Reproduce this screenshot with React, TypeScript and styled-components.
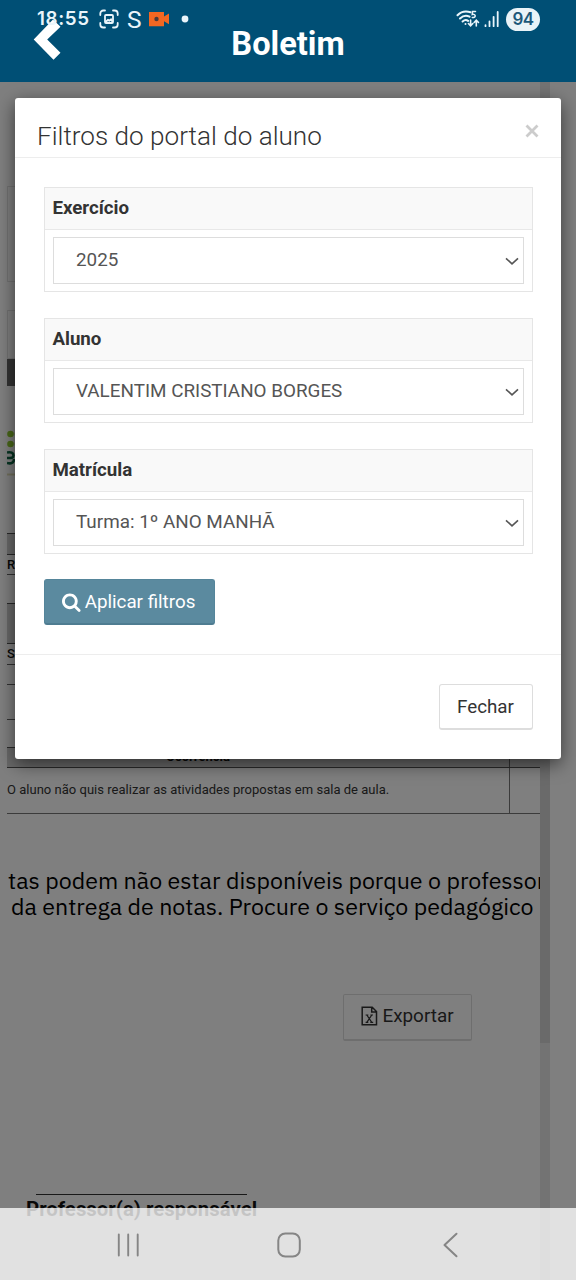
import React from "react";
import styled, { createGlobalStyle } from "styled-components";

const GlobalStyle = createGlobalStyle`
  * { box-sizing: border-box; }
  body { margin: 0; background: #fff; font-family: Roboto, sans-serif; }
  button { font-family: inherit; cursor: pointer; }
`;

const Screen = styled.div`
  position: relative;
  width: 576px;
  height: 1280px;
  overflow: hidden;
  display: flex;
  flex-direction: column;
  background: #fff;
`;

/* ---------- app header ---------- */
const Header = styled.header`
  flex: none;
  height: 82px;
  display: grid;
  grid-template-columns: 61px 1fr 61px;
  align-items: center;
  background: #004f75;
  color: #fff;
`;

const BackButton = styled.button`
  display: flex;
  justify-content: flex-end;
  padding: 0 0 3px;
  border: 0;
  background: none;
  color: inherit;
`;

const HeaderTitle = styled.h1`
  margin: 5px 0 0;
  font-size: 32.6px;
  line-height: 40px;
  font-weight: 700;
  text-align: center;
`;

const StatusBar = styled.div`
  position: absolute;
  z-index: 5;
  top: 0;
  left: 0;
  right: 0;
  height: 38px;
  padding: 0 36px 0 37px;
  display: flex;
  align-items: center;
  justify-content: space-between;
  color: #eaf5fb;
`;

const StatusGroup = styled.div<{ $gap: number }>`
  display: flex;
  align-items: center;
  gap: ${(p) => p.$gap}px;
`;

const Clock = styled.span`
  width: 54px;
  font: 600 18.8px/20px Inter, sans-serif;
  letter-spacing: 0.6px;
  white-space: nowrap;
`;

const AppLetter = styled.span`
  margin: 0 -1px 0 0;
  padding-top: 1px;
  font-size: 24.5px;
  line-height: 24px;
`;

const Battery = styled.span`
  width: 34px;
  height: 23px;
  margin-left: 2px;
  border-radius: 12px;
  background: #e9f3f8;
  color: #1c587a;
  font: 600 17px/23px Inter, sans-serif;
  letter-spacing: -0.6px;
  text-align: center;
`;

/* ---------- report page ---------- */
const Body = styled.div`
  flex: 1;
  min-height: 0;
  display: grid;
  grid-template-columns: 533px 10px 1fr;
  padding-left: 7px;
`;

const Report = styled.main`
  overflow: hidden;
  display: flex;
  flex-direction: column;
  color: #111;
`;

const ScrollTrack = styled.div`
  padding-top: 16px;
  background: #e6e6e6;
`;

const ScrollThumb = styled.div`
  height: 945px;
  background: #d4d4d4;
`;

const Spacer = styled.div<{ $h: number }>`
  flex: none;
  height: ${(p) => p.$h}px;
`;

const Panel = styled.div<{ $h: number }>`
  flex: none;
  height: ${(p) => p.$h}px;
  border: 1px solid #e2e2e2;
`;

const DarkBar = styled.div`
  flex: none;
  height: 27px;
  background: #666;
`;

const LogoBlock = styled.div`
  flex: none;
  height: 147px;
  padding-top: 38px;
`;

const HeadRow = styled.div<{ $h: number }>`
  flex: none;
  height: ${(p) => p.$h}px;
  display: flex;
  border: solid #555;
  border-width: 1px 0;
  background: #d2d2d2;
`;

const TextRow = styled.div<{ $h: number }>`
  flex: none;
  height: ${(p) => p.$h}px;
  border-bottom: 1px solid #666;
  font-size: 13px;
  line-height: ${(p) => p.$h - 1}px;
  font-weight: 500;
`;

const OccurrenceHead = styled.div`
  width: 503px;
  padding-left: 159px;
  border-right: 1px solid #666;
  font-size: 13px;
  line-height: 17px;
  font-weight: 700;
`;

const OccurrenceRow = styled.div`
  flex: none;
  height: 46px;
  display: flex;
  border-bottom: 1px solid #777;
`;

const OccurrenceText = styled.div`
  width: 503px;
  border-right: 1px solid #777;
  font-size: 13px;
  line-height: 43px;
  letter-spacing: 0.02px;
  white-space: nowrap;
  color: #333;
`;

const Notice = styled.p<{ $indent: number }>`
  flex: none;
  margin: 0;
  padding-left: ${(p) => p.$indent}px;
  font: 400 23.2px/26px "IBM Plex Sans", "Noto Sans", sans-serif;
  white-space: nowrap;
  color: #000;
`;

const ExportButton = styled.button`
  flex: none;
  align-self: flex-end;
  width: 129px;
  height: 47px;
  margin-right: 68px;
  padding: 0 0 3px;
  display: flex;
  align-items: center;
  justify-content: center;
  gap: 4px;
  border: 1px solid #ddd;
  border-bottom-width: 2px;
  border-radius: 2px;
  background: #fff;
  color: #333;
  font-size: 18.9px;
`;

const Signature = styled.div`
  flex: none;
  width: 211px;
  margin-left: 29px;
  border-top: 1px solid #333;
`;

const SignatureName = styled.div`
  margin-left: -10px;
  padding-top: 2px;
  font-size: 20.4px;
  line-height: 24px;
  font-weight: 700;
  white-space: nowrap;
`;

const Backdrop = styled.div`
  position: absolute;
  z-index: 1;
  inset: 82px 0 0;
  background: rgba(0, 0, 0, 0.5);
`;

/* ---------- filter dialog ---------- */
const Dialog = styled.section`
  position: absolute;
  z-index: 2;
  top: 98px;
  left: 15px;
  width: 546px;
  height: 661px;
  display: flex;
  flex-direction: column;
  border-radius: 3px;
  background: #fff;
  box-shadow: 0 5px 18px rgba(0, 0, 0, 0.55);
`;

const DialogHeader = styled.div`
  height: 60px;
  padding: 16px 22px 0;
  display: flex;
  justify-content: space-between;
  border-bottom: 1px solid #ededed;
`;

const DialogTitle = styled.h2`
  margin: 0;
  font-size: 26.1px;
  line-height: 44px;
  font-weight: 300;
  color: #333;
  white-space: nowrap;
`;

const CloseButton = styled.button`
  height: 34px;
  padding: 0;
  border: 0;
  background: none;
  color: #ccc;
  line-height: 0;
`;

const DialogBody = styled.div`
  height: 497px;
  padding: 29px 28px 0 29px;
  display: flex;
  flex-direction: column;
  align-items: stretch;
  border-bottom: 1px solid #ededed;
`;

const Field = styled.div`
  height: 105px;
  margin-bottom: 26px;
  border: 1px solid #e5e5e5;

  &:last-of-type {
    margin-bottom: 25px;
  }
`;

const FieldLabel = styled.div`
  height: 42px;
  padding-left: 7.4px;
  border-bottom: 1px solid #e8e8e8;
  background: #f9f9f9;
  color: #333;
  font-size: 18.7px;
  line-height: 41px;
  font-weight: 700;
`;

const SelectBox = styled.div`
  height: 47px;
  margin: 7px 8px 0 7.5px;
  padding: 0 4px 2px 22.5px;
  display: flex;
  align-items: center;
  justify-content: space-between;
  border: 1px solid #ddd;
  color: #555;
  font-size: 18.85px;
  white-space: nowrap;
`;

const ApplyButton = styled.button`
  align-self: flex-start;
  width: 171px;
  height: 46px;
  padding: 0 2px 0 0;
  display: flex;
  align-items: center;
  justify-content: center;
  gap: 3px;
  border: 1px solid #55859a;
  border-bottom: 2px solid #4e7c91;
  border-radius: 3px;
  background: #5b8a9f;
  color: #fff;
  font-size: 18.8px;
  white-space: nowrap;
`;

const DialogFooter = styled.div`
  padding: 29px 28px 0;
  display: flex;
  justify-content: flex-end;
`;

const DismissButton = styled.button`
  width: 94px;
  height: 46px;
  padding: 0 1px 0 0;
  border: 1px solid #ddd;
  border-bottom-width: 2px;
  border-radius: 3px;
  background: #fff;
  color: #333;
  font-size: 18.8px;
`;

/* ---------- system navigation ---------- */
const NavBar = styled.nav`
  position: absolute;
  z-index: 3;
  bottom: 0;
  left: 0;
  right: 0;
  height: 72px;
  padding: 2px 117px 0 116px;
  display: grid;
  grid-template-columns: 24px 1fr 18px;
  align-items: center;
  justify-items: center;
  background: rgba(255, 255, 255, 0.765);
  color: #858585;
`;

const BackIcon = () => (
  <svg width="28" height="43" viewBox="0 0 28 43" fill="currentColor">
    <path d="M.7 21.5 20 1.5l7.5 7.2-13.3 12.8 13.3 13.2-7 7z" />
  </svg>
);

const CaptureIcon = () => (
  <svg width="20" height="20" viewBox="0 0 20 20" fill="none" stroke="currentColor" strokeWidth="1.8" strokeLinecap="round">
    <path d="M1.3 6V4.5a3 3 0 0 1 3-3H6M14 1.5h1.7a3 3 0 0 1 3 3V6M18.7 14v1.5a3 3 0 0 1-3 3H14M6 18.5H4.3a3 3 0 0 1-3-3V14" />
    <rect x="6" y="6" width="8" height="8" rx="1" />
    <path d="M7 12.5 9 11l1.400.7L12 10.500l1 1.500" strokeWidth="2" />
  </svg>
);

const CameraIcon = () => (
  <svg width="21" height="16" viewBox="0 0 21 16">
    <path fill="#f26722" d="M0 1h15v4.600L20 2.500v10.800L15 10.200v5H0z" />
    <circle cx="7.500" cy="8" r="2.200" fill="#4a3b3b" />
  </svg>
);

const WifiIcon = () => (
  <svg width="24" height="20" viewBox="0 0 24 20" fill="none" stroke="currentColor" strokeWidth="2" strokeLinecap="round">
    <path d="M1.500 6.200C5 2.600 10 1.800 14.500 3.200M4 9.500c3-2.800 6.500-3.300 9.500-1.800M6.600 12.500c1.800-1.600 4-1.700 5.500-.6" />
    <circle cx="9.500" cy="15" r="1" fill="currentColor" stroke="none" />
    <path d="M19.500 2.400h-3l-.3 3.100c3.600-.9 4.400 3.200.1 3.100" strokeWidth="1.500" />
    <path d="M14.600 11v5.500m-2.200-2 2.200 2.300 2.200-2.300M20.300 17v-5.500m-2.200 2 2.200-2.300 2.200 2.300" strokeWidth="1.600" />
  </svg>
);

const SignalIcon = () => (
  <svg width="16" height="18" viewBox="0 0 16 18" stroke="currentColor" strokeWidth="1.800" strokeLinecap="round">
    <path d="M1.500 15.200v1M5.500 11.500v4.700M9.600 6.800v9.400M13.700 2v14.200" />
  </svg>
);

const Dot = () => (
  <svg width="12" height="8" viewBox="0 0 12 8" fill="currentColor"><circle cx="7" cy="4" r="3.400" /></svg>
);

const ChevronIcon = () => (
  <svg width="14" height="10" viewBox="0 0 14 10" fill="none" stroke="#555" strokeWidth="1.600">
    <path d="M1 3.300 7 8.800l6-5.500" />
  </svg>
);

const CrossIcon = () => (
  <svg width="14" height="14" viewBox="0 0 14 14" stroke="currentColor" strokeWidth="2.800">
    <path d="m1.500 1.500 11 11m0-11-11 11" />
  </svg>
);

const SearchIcon = () => (
  <svg width="20" height="20" viewBox="0 0 1792 1792" fill="currentColor">
    <path d="M1152 832q0-185-131.500-316.500t-316.500-131.500-316.500 131.500-131.500 316.500 131.500 316.500 316.500 131.500 316.500-131.500 131.500-316.500zm512 832q0 52-38 90t-90 38q-54 0-90-38l-343-342q-179 124-399 124-143 0-273.500-55.500t-225-150-150-225-55.500-273.500 55.500-273.500 150-225 225-150 273.500-55.500 273.500 55.500 225 150 150 225 55.500 273.500q0 220-124 399l343 343q37 37 37 90z" />
  </svg>
);

const SheetIcon = () => (
  <svg width="17" height="20" viewBox="0 0 17 20" fill="none" stroke="currentColor" strokeWidth="1.500">
    <path d="M1.200 1.200h10l4.300 4.300v13.300H1.200zM10.700 1.200V6h4.800" />
    <path d="m5.800 9 5 7.300M10.800 9l-5 7.300M4.600 9h2.800M9.400 9h2.600M4.600 16.300h2.700M9.300 16.300h2.900" strokeWidth="1.200" />
  </svg>
);

const LogoMark = () => (
  <svg width="16" height="60" viewBox="0 0 16 60">
    <g fill="#93cf32">
      <circle cx="3.500" cy="10" r="3.300" /><circle cx="11" cy="10" r="3.300" />
      <circle cx="3.500" cy="20" r="3.300" /><circle cx="11" cy="20" r="3.300" />
    </g>
    <path d="M0 28.500c4-1 6.500.5 6.500 3s-2 2.500-6.500 2.500M0 39c4 1 7 0 7-4" fill="none" stroke="#0c6844" strokeWidth="2.600" />
    <path d="M0 50.500h8" stroke="#e3dfb8" strokeWidth="2" />
  </svg>
);

const RecentsIcon = () => (
  <svg width="24" height="26" viewBox="0 0 24 26" stroke="currentColor" strokeWidth="1.900" strokeLinecap="round">
    <path d="M2.800 2.500v21M12.200 2.500v21M21.700 2.500v21" />
  </svg>
);

const HomeIcon = () => (
  <svg width="30" height="26" viewBox="0 0 30 26" fill="none" stroke="currentColor" strokeWidth="2">
    <rect x="2.300" y="1.500" width="21.500" height="23" rx="7" />
  </svg>
);

const NavBackIcon = () => (
  <svg width="18" height="26" viewBox="0 0 18 26" fill="none" stroke="currentColor" strokeWidth="2" strokeLinecap="round" strokeLinejoin="round">
    <path d="M15.500 1.800 3.500 13l12 11.300" />
  </svg>
);

const filters = [
  { label: "Exercício", value: "2025" },
  { label: "Aluno", value: "VALENTIM CRISTIANO BORGES" },
  { label: "Matrícula", value: "Turma: 1º ANO MANHÃ" },
];

export default function App() {
  return (
    <>
      <GlobalStyle />
      <Screen>
        <StatusBar>
          <StatusGroup $gap={8}>
            <Clock>18:55</Clock>
            <CaptureIcon />
            <AppLetter>S</AppLetter>
            <CameraIcon />
            <Dot />
          </StatusGroup>
          <StatusGroup $gap={4}>
            <WifiIcon />
            <SignalIcon />
            <Battery>94</Battery>
          </StatusGroup>
        </StatusBar>

        <Header>
          <BackButton aria-label="Voltar"><BackIcon /></BackButton>
          <HeaderTitle>Boletim</HeaderTitle>
        </Header>

        <Body>
          <Report>
            <Spacer $h={104} />
            <Panel $h={96} />
            <Spacer $h={28} />
            <Panel $h={49} />
            <DarkBar />
            <LogoBlock><LogoMark /></LogoBlock>
            <HeadRow $h={22} />
            <TextRow $h={20}>R</TextRow>
            <Spacer $h={28} />
            <HeadRow $h={41} />
            <TextRow $h={21}>SA</TextRow>
            <TextRow $h={20} />
            <TextRow $h={35} />
            <Spacer $h={27} />
            <HeadRow $h={21}>
              <OccurrenceHead>Ocorrência</OccurrenceHead>
            </HeadRow>
            <OccurrenceRow>
              <OccurrenceText>O aluno não quis realizar as atividades propostas em sala de aula.</OccurrenceText>
            </OccurrenceRow>
            <Spacer $h={53} />
            <Notice $indent={1}>tas podem não estar disponíveis porque o professor</Notice>
            <Notice $indent={4}>da entrega de notas. Procure o serviço pedagógico</Notice>
            <Spacer $h={75} />
            <ExportButton><SheetIcon />Exportar</ExportButton>
            <Spacer $h={153} />
            <Signature>
              <SignatureName>Professor(a) responsável</SignatureName>
            </Signature>
          </Report>
          <ScrollTrack><ScrollThumb /></ScrollTrack>
        </Body>

        <Backdrop />

        <Dialog role="dialog" aria-label="Filtros do portal do aluno">
          <DialogHeader>
            <DialogTitle>Filtros do portal do aluno</DialogTitle>
            <CloseButton aria-label="Fechar"><CrossIcon /></CloseButton>
          </DialogHeader>
          <DialogBody>
            {filters.map((f) => (
              <Field key={f.label}>
                <FieldLabel>{f.label}</FieldLabel>
                <SelectBox>{f.value}<ChevronIcon /></SelectBox>
              </Field>
            ))}
            <ApplyButton><SearchIcon />Aplicar filtros</ApplyButton>
          </DialogBody>
          <DialogFooter>
            <DismissButton>Fechar</DismissButton>
          </DialogFooter>
        </Dialog>

        <NavBar>
          <RecentsIcon />
          <HomeIcon />
          <NavBackIcon />
        </NavBar>
      </Screen>
    </>
  );
}
